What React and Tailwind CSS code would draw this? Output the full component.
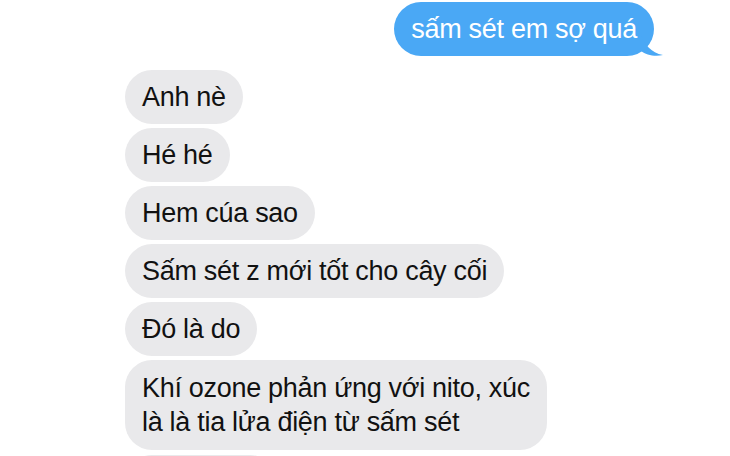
const incoming = [
  "Anh nè",
  "Hé hé",
  "Hem cúa sao",
  "Sấm sét z mới tốt cho cây cối",
  "Đó là do",
];

function Bubble({ children, className = "" }) {
  return (
    <div
      className={`self-start rounded-[27px] bg-[#e9e9eb] px-[17px] py-[10px] text-[27px] leading-[34px] tracking-[-0.3px] text-[#111111] ${className}`}
    >
      {children}
    </div>
  );
}

export default function App() {
  return (
    <div
      className="flex h-[456px] w-[730px] flex-col overflow-hidden bg-white"
      style={{ fontFamily: '"Liberation Sans", Arial, sans-serif' }}
    >
      <div className="mr-[76px] mt-[2px] self-end">
        <div className="relative rounded-[27px] bg-[#4aa8f5] px-[17px] py-[10px] text-[27px] leading-[34px] tracking-[-0.3px] text-white">
          sấm sét em sợ quá
          <svg
            className="absolute -right-[11px] bottom-0"
            width="24"
            height="22"
            viewBox="0 0 24 22"
          >
            <path d="M0 0 C3 10 10 19 22 21 C14 23 5 21 0 17 Z" fill="#4aa8f5" />
          </svg>
        </div>
      </div>

      <div className="ml-[125px] mt-[14px] flex flex-col gap-[4px]">
        {incoming.map((text) => (
          <Bubble key={text}>{text}</Bubble>
        ))}
        <Bubble className="rounded-[24px] py-[11px]">
          Khí ozone phản ứng với nito, xúc
          <br />
          là là tia lửa điện từ sấm sét
        </Bubble>
        {/* next message, only its top edge is in view */}
        <div className="mt-[1px] h-[54px] w-[152px] rounded-[27px] bg-[#e9e9eb]" />
      </div>
    </div>
  );
}
